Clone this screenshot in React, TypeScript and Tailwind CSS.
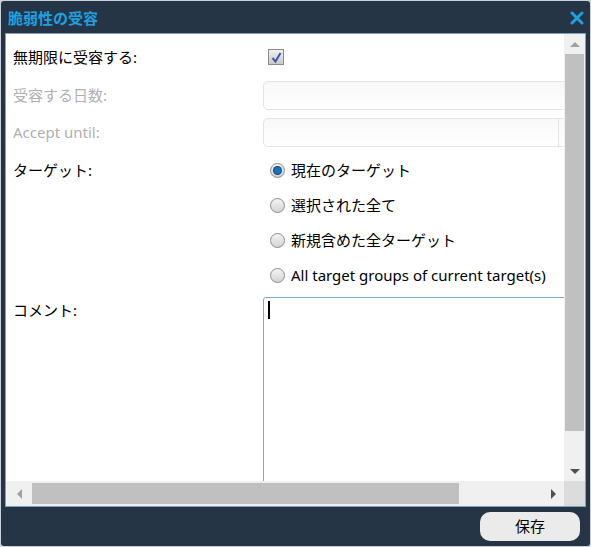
import React from "react";

const font = { fontFamily: '"Noto Sans", "Noto Sans CJK JP", sans-serif' };

function Radio({ checked, label }: { checked?: boolean; label: string }) {
  return (
    <div className="flex h-[35px] items-center gap-[6px] pl-[7px] text-[15px] text-black">
      <span className="grid h-[15px] w-[15px] place-items-center rounded-full border border-[#8a8a8a] bg-gradient-to-b from-[#f4f4f4] to-[#d4d4d4]">
        {checked && <span className="h-[7px] w-[7px] rounded-full bg-[#1c6fb8] ring-1 ring-[#0c4a80]" />}
      </span>
      <span className="whitespace-nowrap">{label}</span>
    </div>
  );
}

export default function App() {
  return (
    <div className="h-[547px] w-[591px] bg-[#c9d2dc] p-[1px]" style={font}>
      <div className="flex h-[545px] flex-col rounded-[3px] bg-[#253545]">
        <div className="flex h-[32px] items-center justify-between pl-[7px] pr-[6px] pt-[2px]">
          <span className="text-[15px] font-bold text-[#1ea0e0]">脆弱性の受容</span>
          <svg width="14" height="14" viewBox="0 0 14 14">
            <path d="M2 2 L12 12 M12 2 L2 12" stroke="#1ea0e0" strokeWidth="3" strokeLinecap="round" />
          </svg>
        </div>
        <div className="mx-[4px] flex h-[474px] flex-col border border-[#7fa0c0] bg-white">
          <div className="flex min-h-0 flex-1">
            <div className="flex-1 overflow-hidden">
              <div className="w-[700px] pl-[7px] text-[15px]">
                <div className="flex h-[43px] items-center pt-[3px]">
                  <span className="w-[250px] text-black">無期限に受容する:</span>
                  <span className="ml-[5px] grid h-[16px] w-[16px] place-items-center border border-[#8a8a8a] bg-gradient-to-b from-[#f0f0f0] to-[#c8c8c8]">
                    <svg width="11" height="11" viewBox="0 0 11 11">
                      <path d="M1.5 6 L4.5 9.5 L9.5 1" stroke="#3a5aa8" strokeWidth="2" fill="none" />
                    </svg>
                  </span>
                </div>
                <div className="flex h-[37px] items-center">
                  <span className="w-[250px] text-[#b0b0b0]">受容する日数:</span>
                  <div className="h-[29px] w-[400px] rounded-[5px] border border-[#e4e4e4] bg-gradient-to-b from-[#f8f8f8] to-white" />
                </div>
                <div className="flex h-[37px] items-center">
                  <span className="w-[250px] text-[#b0b0b0]">Accept until:</span>
                  <div className="flex h-[29px] w-[400px] rounded-[5px] border border-[#e4e4e4] bg-gradient-to-b from-[#f8f8f8] to-white">
                    <div className="w-[295px] border-r border-[#e4e4e4]" />
                  </div>
                </div>
                <div className="flex pt-[2px]">
                  <span className="w-[250px] pt-[6px] text-black">ターゲット:</span>
                  <div className="flex flex-col">
                    <Radio checked label="現在のターゲット" />
                    <Radio label="選択された全て" />
                    <Radio label="新規含めた全ターゲット" />
                    <Radio label="All target groups of current target(s)" />
                  </div>
                </div>
                <div className="flex pt-[4px]">
                  <span className="w-[250px] pt-[2px] text-black">コメント:</span>
                  <div className="h-[200px] w-[400px] rounded-[3px] border border-[#7fa8d0] pl-[4px] pt-[3px]">
                    <div className="h-[18px] w-[2px] bg-black" />
                  </div>
                </div>
              </div>
            </div>
            <div className="flex w-[21px] flex-col items-center bg-[#f0f0f0]">
              <div className="flex h-[20px] items-center">
                <span className="h-0 w-0 border-x-[5px] border-b-[5px] border-x-transparent border-b-[#a0a0a0]" />
              </div>
              <div className="w-[19px] flex-1 bg-[#c0c0c0]" />
              <div className="h-[30px]" />
              <div className="flex h-[20px] items-center">
                <span className="h-0 w-0 border-x-[5px] border-t-[5px] border-x-transparent border-t-[#505050]" />
              </div>
            </div>
          </div>
          <div className="flex h-[25px] items-center bg-[#f0f0f0]">
            <div className="flex w-[26px] justify-center">
              <span className="h-0 w-0 border-y-[5px] border-r-[5px] border-y-transparent border-r-[#a0a0a0]" />
            </div>
            <div className="h-[21px] w-[427px] bg-[#c0c0c0]" />
            <div className="flex flex-1 justify-end pr-[8px]">
              <span className="h-0 w-0 border-y-[5px] border-l-[5px] border-y-transparent border-l-[#505050]" />
            </div>
            <div className="h-full w-[21px] bg-[#dcdcdc]" />
          </div>
        </div>
        <div className="flex flex-1 items-center justify-end pr-[10px]">
          <button className="h-[29px] w-[100px] rounded-[10px] bg-[#ebebeb] text-[15px] text-black">保存</button>
        </div>
      </div>
    </div>
  );
}
